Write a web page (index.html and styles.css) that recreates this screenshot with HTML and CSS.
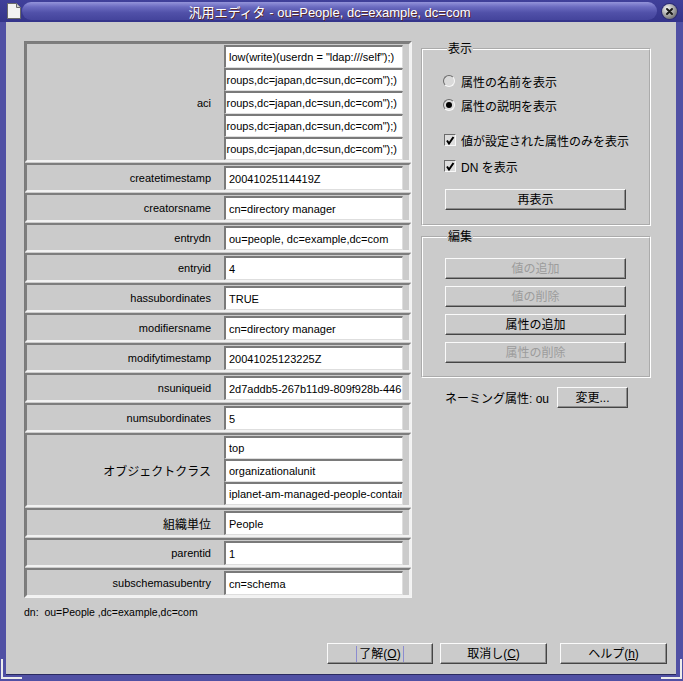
FILE: index.html
```html
<!DOCTYPE html>
<html lang="ja">
<head>
<meta charset="utf-8">
<title>汎用エディタ</title>
<link rel="stylesheet" href="styles.css">
</head>
<body>
<div class="window">
  <div class="titlebar">
    <svg class="doc-icon" width="14" height="16" viewBox="0 0 14 16">
      <path d="M0.5 0.5 H9.5 L13.5 4.5 V15.5 H0.5 Z" fill="#f2f2f2" stroke="#6a6a6a"/>
      <path d="M9.5 0.5 V4.5 H13.5" fill="#cfcfcf" stroke="#6a6a6a"/>
    </svg>
    <div class="pill"><span class="title">汎用エディタ - ou=People, dc=example, dc=com</span></div>
    <div class="close">
      <svg width="15" height="15" viewBox="0 0 15 15">
        <path d="M5 5 L10 10 M10 5 L5 10" stroke="#1a1a1a" stroke-width="2" stroke-linecap="round"/>
      </svg>
    </div>
  </div>

  <div class="client">
    <div class="main">
      <div class="table">
        <div class="row">
          <div class="label">aci</div>
          <div class="values">
            <div class="field"><span>low(write)(userdn = "ldap:///self");)</span></div>
            <div class="field end"><span>(groupdn = "ldap:///cn=admin,ou=groups,dc=japan,dc=sun,dc=com");)</span></div>
            <div class="field end"><span>(groupdn = "ldap:///cn=help,ou=groups,dc=japan,dc=sun,dc=com");)</span></div>
            <div class="field end"><span>(groupdn = "ldap:///cn=dev,ou=groups,dc=japan,dc=sun,dc=com");)</span></div>
            <div class="field end"><span>(groupdn = "ldap:///cn=ops,ou=groups,dc=japan,dc=sun,dc=com");)</span></div>
          </div>
        </div>
        <div class="row"><div class="label">createtimestamp</div><div class="values"><div class="field single"><span>20041025114419Z</span></div></div></div>
        <div class="row"><div class="label">creatorsname</div><div class="values"><div class="field single"><span>cn=directory manager</span></div></div></div>
        <div class="row"><div class="label">entrydn</div><div class="values"><div class="field single"><span>ou=people, dc=example,dc=com</span></div></div></div>
        <div class="row"><div class="label">entryid</div><div class="values"><div class="field single"><span>4</span></div></div></div>
        <div class="row"><div class="label">hassubordinates</div><div class="values"><div class="field single"><span>TRUE</span></div></div></div>
        <div class="row"><div class="label">modifiersname</div><div class="values"><div class="field single"><span>cn=directory manager</span></div></div></div>
        <div class="row"><div class="label">modifytimestamp</div><div class="values"><div class="field single"><span>20041025123225Z</span></div></div></div>
        <div class="row"><div class="label">nsuniqueid</div><div class="values"><div class="field single"><span>2d7addb5-267b11d9-809f928b-446</span></div></div></div>
        <div class="row"><div class="label">numsubordinates</div><div class="values"><div class="field single"><span>5</span></div></div></div>
        <div class="row">
          <div class="label ja">オブジェクトクラス</div>
          <div class="values">
            <div class="field"><span>top</span></div>
            <div class="field"><span>organizationalunit</span></div>
            <div class="field"><span>iplanet-am-managed-people-container</span></div>
          </div>
        </div>
        <div class="row"><div class="label ja">組織単位</div><div class="values"><div class="field single"><span>People</span></div></div></div>
        <div class="row"><div class="label">parentid</div><div class="values"><div class="field single"><span>1</span></div></div></div>
        <div class="row"><div class="label">subschemasubentry</div><div class="values"><div class="field single"><span>cn=schema</span></div></div></div>
      </div>

      <div class="side">
        <fieldset class="group group-view">
          <legend>表示</legend>
          <div class="opt radio-row"><span class="radio"></span><span>属性の名前を表示</span></div>
          <div class="opt radio-row"><span class="radio on"></span><span>属性の説明を表示</span></div>
          <div class="opt check-row first"><span class="check"><svg width="10" height="10" viewBox="0 0 10 10"><path d="M2 5.5 L4 8.5 L8.5 2" fill="none" stroke="#000" stroke-width="2"/></svg></span><span>値が設定された属性のみを表示</span></div>
          <div class="opt check-row"><span class="check"><svg width="10" height="10" viewBox="0 0 10 10"><path d="M2 5.5 L4 8.5 L8.5 2" fill="none" stroke="#000" stroke-width="2"/></svg></span><span>DN を表示</span></div>
          <button class="btn wide refresh">再表示</button>
        </fieldset>

        <fieldset class="group group-edit">
          <legend>編集</legend>
          <div class="btn-stack">
            <button class="btn wide" disabled>値の追加</button>
            <button class="btn wide" disabled>値の削除</button>
            <button class="btn wide">属性の追加</button>
            <button class="btn wide" disabled>属性の削除</button>
          </div>
        </fieldset>

        <div class="naming">
          <span>ネーミング属性: ou</span>
          <button class="btn change">変更...</button>
        </div>
      </div>
    </div>

    <div class="dn">dn:&nbsp; ou=People ,dc=example,dc=com</div>

    <div class="actions">
      <button class="btn action ok"><span class="focus">了解(<u>O</u>)</span></button>
      <button class="btn action cancel">取消し(<u>C</u>)</button>
      <button class="btn action help">ヘルプ(<u>h</u>)</button>
    </div>
  </div>

  <div class="corner corner-bl"></div>
  <div class="corner corner-br"></div>
</div>
</body>
</html>
```

FILE: styles.css
```css
* {
  box-sizing: border-box;
}

html,
body {
  margin: 0;
  padding: 0;
}

body {
  width: 683px;
  height: 681px;
  overflow: hidden;
  background: #cbcbcb;
  font-family: "Liberation Sans", "Noto Sans CJK JP", sans-serif;
  font-size: 11px;
  color: #000;
}

.window {
  position: relative;
  width: 683px;
  height: 681px;
  display: flex;
  flex-direction: column;
  background: #5050a4;
}

/* ---------- title bar ---------- */
.titlebar {
  height: 22px;
  flex: none;
  display: flex;
  align-items: center;
  padding: 0 6px 0 7px;
  background: linear-gradient(#40409a, #34348a);
}

.doc-icon {
  flex: none;
  display: block;
}

.pill {
  flex: 1;
  height: 18px;
  margin: 0 5px 0 1px;
  border-radius: 9px;
  background: linear-gradient(#9494da 0%, #6a6ac0 28%, #5050a8 60%, #44449c 100%);
  display: flex;
  align-items: center;
  justify-content: center;
  padding-right: 20px;
}

.title {
  font-size: 13px;
  color: #fff;
  white-space: nowrap;
  text-shadow: 1px 1px 0 #5a2a2a;
}

.close {
  flex: none;
  width: 15px;
  height: 15px;
  border-radius: 50%;
  background: radial-gradient(circle at 35% 30%, #f2f2f2 0%, #a8a8a8 45%, #4a4a4a 100%);
  box-shadow: 0 0 0 1px #2c2c70;
}

.close svg {
  display: block;
}

/* ---------- client area ---------- */
.client {
  flex: 1;
  margin: 0 7px 6px 6px;
  background: #cbcbcb;
  display: flex;
  flex-direction: column;
  padding: 19px 9px 10px 18px;
  border-bottom: 1px solid #2a2a60;
}

.main {
  display: flex;
  align-items: flex-start;
  gap: 9px;
}

/* ---------- attribute table ---------- */
.table {
  width: 388px;
  flex: none;
  border: 1px solid;
  border-color: #7a7a7a #f4f4f4 #f4f4f4 #7a7a7a;
  display: flex;
  flex-direction: column;
}

.row {
  display: flex;
  min-height: 29px;
  margin-bottom: 1px;
  padding-top: 1px;
  border: 2px solid;
  border-color: #7d7d7d #f2f2f2 #f2f2f2 #7d7d7d;
}

.row:last-child {
  margin-bottom: 0;
}

.label {
  flex: 1;
  align-self: center;
  text-align: right;
  padding-right: 13px;
  white-space: nowrap;
}

.label.ja {
  font-size: 12px;
}

.values {
  width: 179px;
  margin-right: 6px;
  display: flex;
  flex-direction: column;
}

.field {
  height: 23px;
  background: #fff;
  border-top: 2px solid #7a7a7a;
  border-left: 2px solid #7a7a7a;
  border-right: 1px solid #dedede;
  border-bottom: 1px solid #dedede;
  display: flex;
  align-items: center;
  padding: 0 5px 0 3px;
  overflow: hidden;
  white-space: nowrap;
}

.field.single {
  height: 24px;
}

.field.end {
  justify-content: flex-end;
}

.field span {
  flex: none;
}

/* ---------- right side ---------- */
.side {
  width: 230px;
  flex: none;
  display: flex;
  flex-direction: column;
  font-size: 12px;
}

.group {
  margin: 0;
  min-inline-size: 0;
  border: 2px groove #ffffff;
  padding: 12px 0 14px 20px;
}

.group legend {
  padding: 0 1px;
  margin-left: 4px;
  font-size: 12px;
  line-height: 16px;
}

.group-edit {
  margin-top: 3px;
  padding: 13px 0 13px 20px;
}

.opt {
  display: flex;
  align-items: center;
}

.radio-row {
  height: 24px;
  gap: 6px;
}

.check-row {
  height: 22px;
  gap: 5px;
  margin-top: 4px;
}

.check-row.first {
  margin-top: 12px;
}

.radio {
  position: relative;
  width: 12px;
  height: 12px;
  flex: none;
  border-radius: 50%;
  border: 1px solid;
  border-color: #6a6a6a #f8f8f8 #f8f8f8 #6a6a6a;
  background: #dadada;
}

.radio.on::after {
  content: "";
  position: absolute;
  left: 2px;
  top: 2px;
  width: 6px;
  height: 6px;
  border-radius: 50%;
  background: #000;
}

.check {
  width: 12px;
  height: 12px;
  flex: none;
  margin-left: 1px;
  border: 1px solid;
  border-color: #6a6a6a #f8f8f8 #f8f8f8 #6a6a6a;
  background: #dedede;
  display: flex;
  align-items: center;
  justify-content: center;
}

.check svg {
  display: block;
}

/* ---------- buttons ---------- */
.btn {
  height: 21px;
  margin: 0;
  padding: 0;
  font-family: "Liberation Sans", "Noto Sans CJK JP", sans-serif;
  font-size: 12px;
  color: #000;
  background: #cbcbcb;
  border: 1px solid;
  border-color: #fafafa #454545 #454545 #fafafa;
  box-shadow: inset -1px -1px 0 #8e8e8e;
  display: flex;
  align-items: center;
  justify-content: center;
  line-height: 1;
}

.btn:disabled {
  color: #9c9c9c;
}

.btn.wide {
  width: 181px;
  margin-left: 2px;
}

.refresh {
  margin-top: 12px;
}

.btn-stack {
  display: flex;
  flex-direction: column;
  gap: 7px;
}

.naming {
  margin-top: 9px;
  padding-left: 24px;
  display: flex;
  align-items: center;
  gap: 8px;
}

.btn.change {
  width: 71px;
}

/* ---------- dn line ---------- */
.dn {
  margin-top: 7px;
  font-size: 10.5px;
  line-height: 14px;
  white-space: pre;
}

/* ---------- dialog actions ---------- */
.actions {
  margin-top: auto;
  display: flex;
  justify-content: flex-end;
  gap: 7px;
}

.btn.action {
  width: 107px;
}

.btn.ok {
  width: 106px;
}

.btn.help {
  margin-left: 6px;
}

.focus {
  display: inline-block;
  padding: 0 2px;
  line-height: 16px;
  border-left: 1px solid #8c8cd0;
  border-right: 1px solid #8c8cd0;
}

u {
  text-underline-offset: 1px;
}

/* ---------- frame corner grips ---------- */
.corner {
  position: absolute;
  width: 21px;
  height: 20px;
  border-color: #ececec;
  border-style: solid;
}

.corner-bl {
  left: 1px;
  bottom: 2px;
  border-width: 0 0 2px 2px;
}

.corner-br {
  right: 1px;
  bottom: 2px;
  border-width: 0 2px 2px 0;
}
```
